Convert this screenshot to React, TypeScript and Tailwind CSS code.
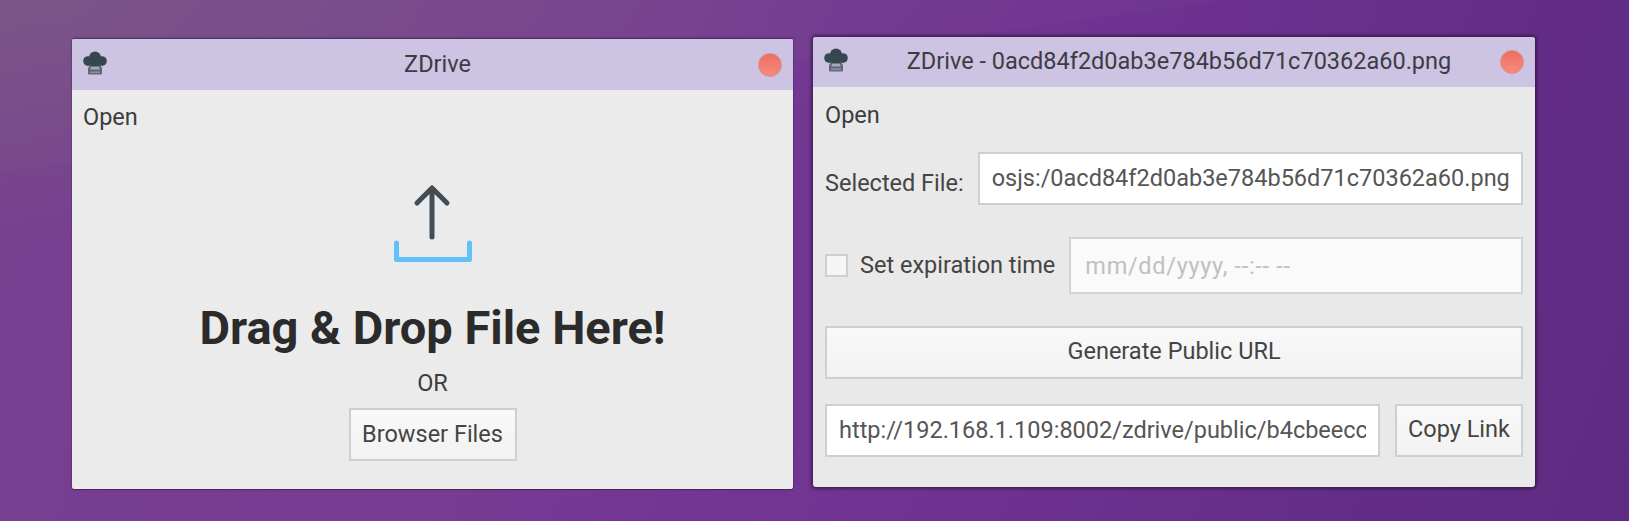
function DriveIcon() {
  return (
    <svg width="24" height="24" viewBox="0 0 24 24" className="mb-[4px] shrink-0">
      <circle cx="12" cy="6.500" r="6" fill="#37474f" />
      <circle cx="5" cy="10" r="4.800" fill="#37474f" />
      <circle cx="19" cy="10" r="4.800" fill="#37474f" />
      <rect x="4" y="8" width="16" height="6.500" fill="#37474f" />
      <path d="M7 13.500h10l2 4v5a1 1 0 0 1-1 1H6a1 1 0 0 1-1-1v-5z" fill="#5d6a75" />
      <path d="M8 12.500h8l1.500 4.500h-11z" fill="#37474f" />
      <rect x="7.500" y="15.500" width="9" height="3" fill="#a9a6bd" />
      <rect x="7" y="20.500" width="10" height="1.500" fill="#8b90a2" />
    </svg>
  )
}

function TitleBar({ title, tall }: { title: string; tall?: boolean }) {
  return (
    <div className={`flex items-center bg-[#cdc3e3] pl-[11px] pr-[11px] ${tall ? 'h-[51px]' : 'h-[50px]'}`}>
      <DriveIcon />
      <div className="flex-1 pl-[10px] text-center text-[23.500px] leading-none text-[#3c3c42]">{title}</div>
      <div className="h-[24px] w-[24px] shrink-0 rounded-full border border-[#d98f88] bg-gradient-to-b from-[#ee6f64] to-[#f48b7c]" />
    </div>
  )
}

const btn =
  'border-2 border-[#cfcfcf] bg-gradient-to-b from-[#f9f9f9] to-[#f2f2f2] text-[23.500px] leading-none text-[#444]'
const field =
  'border-2 border-[#cfcfcf] bg-white pb-[2px] text-[23.500px] text-[#555] outline-none'

function UploadWindow() {
  return (
    <div className="mt-[39px] h-[450px] w-[721px] shrink-0 overflow-hidden rounded-[2px] bg-[#ebebeb] shadow-[0_-1px_2px_rgba(40,20,50,0.6),0_1px_1px_rgba(40,30,50,0.6)]">
      <TitleBar title="ZDrive" tall />
      <div className="pl-[11px] pt-[14px] text-[23.500px] leading-[26px] text-[#3c3c3c]">Open</div>
      <div className="flex flex-col items-center pt-[53px]">
        <svg width="84" height="82" viewBox="0 0 84 82" className="ml-[6px]">
          <path d="M38 54V5M23 20L38 5l15 15" fill="none" stroke="#414e58" strokeWidth="5" strokeLinecap="round" strokeLinejoin="round" />
          <path d="M2.500 60v16.500h73V60" fill="none" stroke="#64c0fb" strokeWidth="5" strokeLinecap="round" strokeLinejoin="round" />
        </svg>
        <div className="pt-[36px] text-[47px] font-bold leading-[54px] text-[#2b2b2b]">Drag &amp; Drop File Here!</div>
        <div className="pt-[15px] text-[23.500px] leading-[26px] text-[#3c3c3c]">OR</div>
        <button className={`mt-[12px] h-[53px] w-[168px] ${btn}`}>Browser Files</button>
      </div>
    </div>
  )
}

function ShareWindow() {
  return (
    <div className="mt-[37px] h-[450px] w-[722px] shrink-0 overflow-hidden rounded-[3px] bg-[#e9e9e9] shadow-[0_0_3px_2px_rgba(30,15,40,0.55)]">
      <TitleBar title="ZDrive - 0acd84f2d0ab3e784b56d71c70362a60.png" />
      <div className="flex flex-col px-[12px] pt-[15px]">
        <div className="text-[23.500px] leading-[26px] text-[#3c3c3c]">Open</div>
        <div className="mt-[24px] flex h-[53px] items-center gap-[14px]">
          <span className="whitespace-nowrap pt-[11px] text-[23.500px] text-[#444]">Selected File:</span>
          <input readOnly value="osjs:/0acd84f2d0ab3e784b56d71c70362a60.png" className={`h-full min-w-0 flex-1 px-[12px] ${field}`} />
        </div>
        <div className="mt-[32px] flex h-[57px] items-center">
          <span className="h-[23px] w-[23px] shrink-0 border-2 border-[#cfcfcf] bg-[#f5f5f5]" />
          <span className="ml-[12px] whitespace-nowrap text-[23.500px] text-[#444]">Set expiration time</span>
          <input
            disabled
            placeholder="mm/dd/yyyy, --:-- --"
            className="ml-[14px] h-full min-w-0 flex-1 border-2 border-[#d4d4d4] bg-[#fafafa] px-[14px] text-[23.500px] tracking-[0.7px] outline-none placeholder:text-[#c0c0c0]"
          />
        </div>
        <button className={`mt-[32px] h-[53px] w-full pb-[2px] ${btn}`}>Generate Public URL</button>
        <div className="mt-[25px] flex h-[53px] gap-[15px]">
          <input
            readOnly
            value="http://192.168.1.109:8002/zdrive/public/b4cbeecc7a91d0e2f6"
            className={`h-full min-w-0 flex-1 px-[12px] ${field}`}
          />
          <button className={`h-full w-[128px] shrink-0 pb-[2px] ${btn}`}>Copy Link</button>
        </div>
      </div>
    </div>
  )
}

export default function App() {
  return (
    <main className="flex h-[521px] w-[1629px] items-start gap-[20px] overflow-hidden bg-[linear-gradient(172deg,rgba(140,150,120,0.06)_0,rgba(140,150,120,0.04)_170px,transparent_171px),radial-gradient(ellipse_900px_240px_at_0_0,rgba(130,140,110,0.22),transparent),linear-gradient(110deg,#77418f_0%,#763b93_35%,#703392_60%,#632d87_85%,#5f2b82_100%)] pl-[72px] font-[Roboto,sans-serif]">
      <UploadWindow />
      <ShareWindow />
    </main>
  )
}
